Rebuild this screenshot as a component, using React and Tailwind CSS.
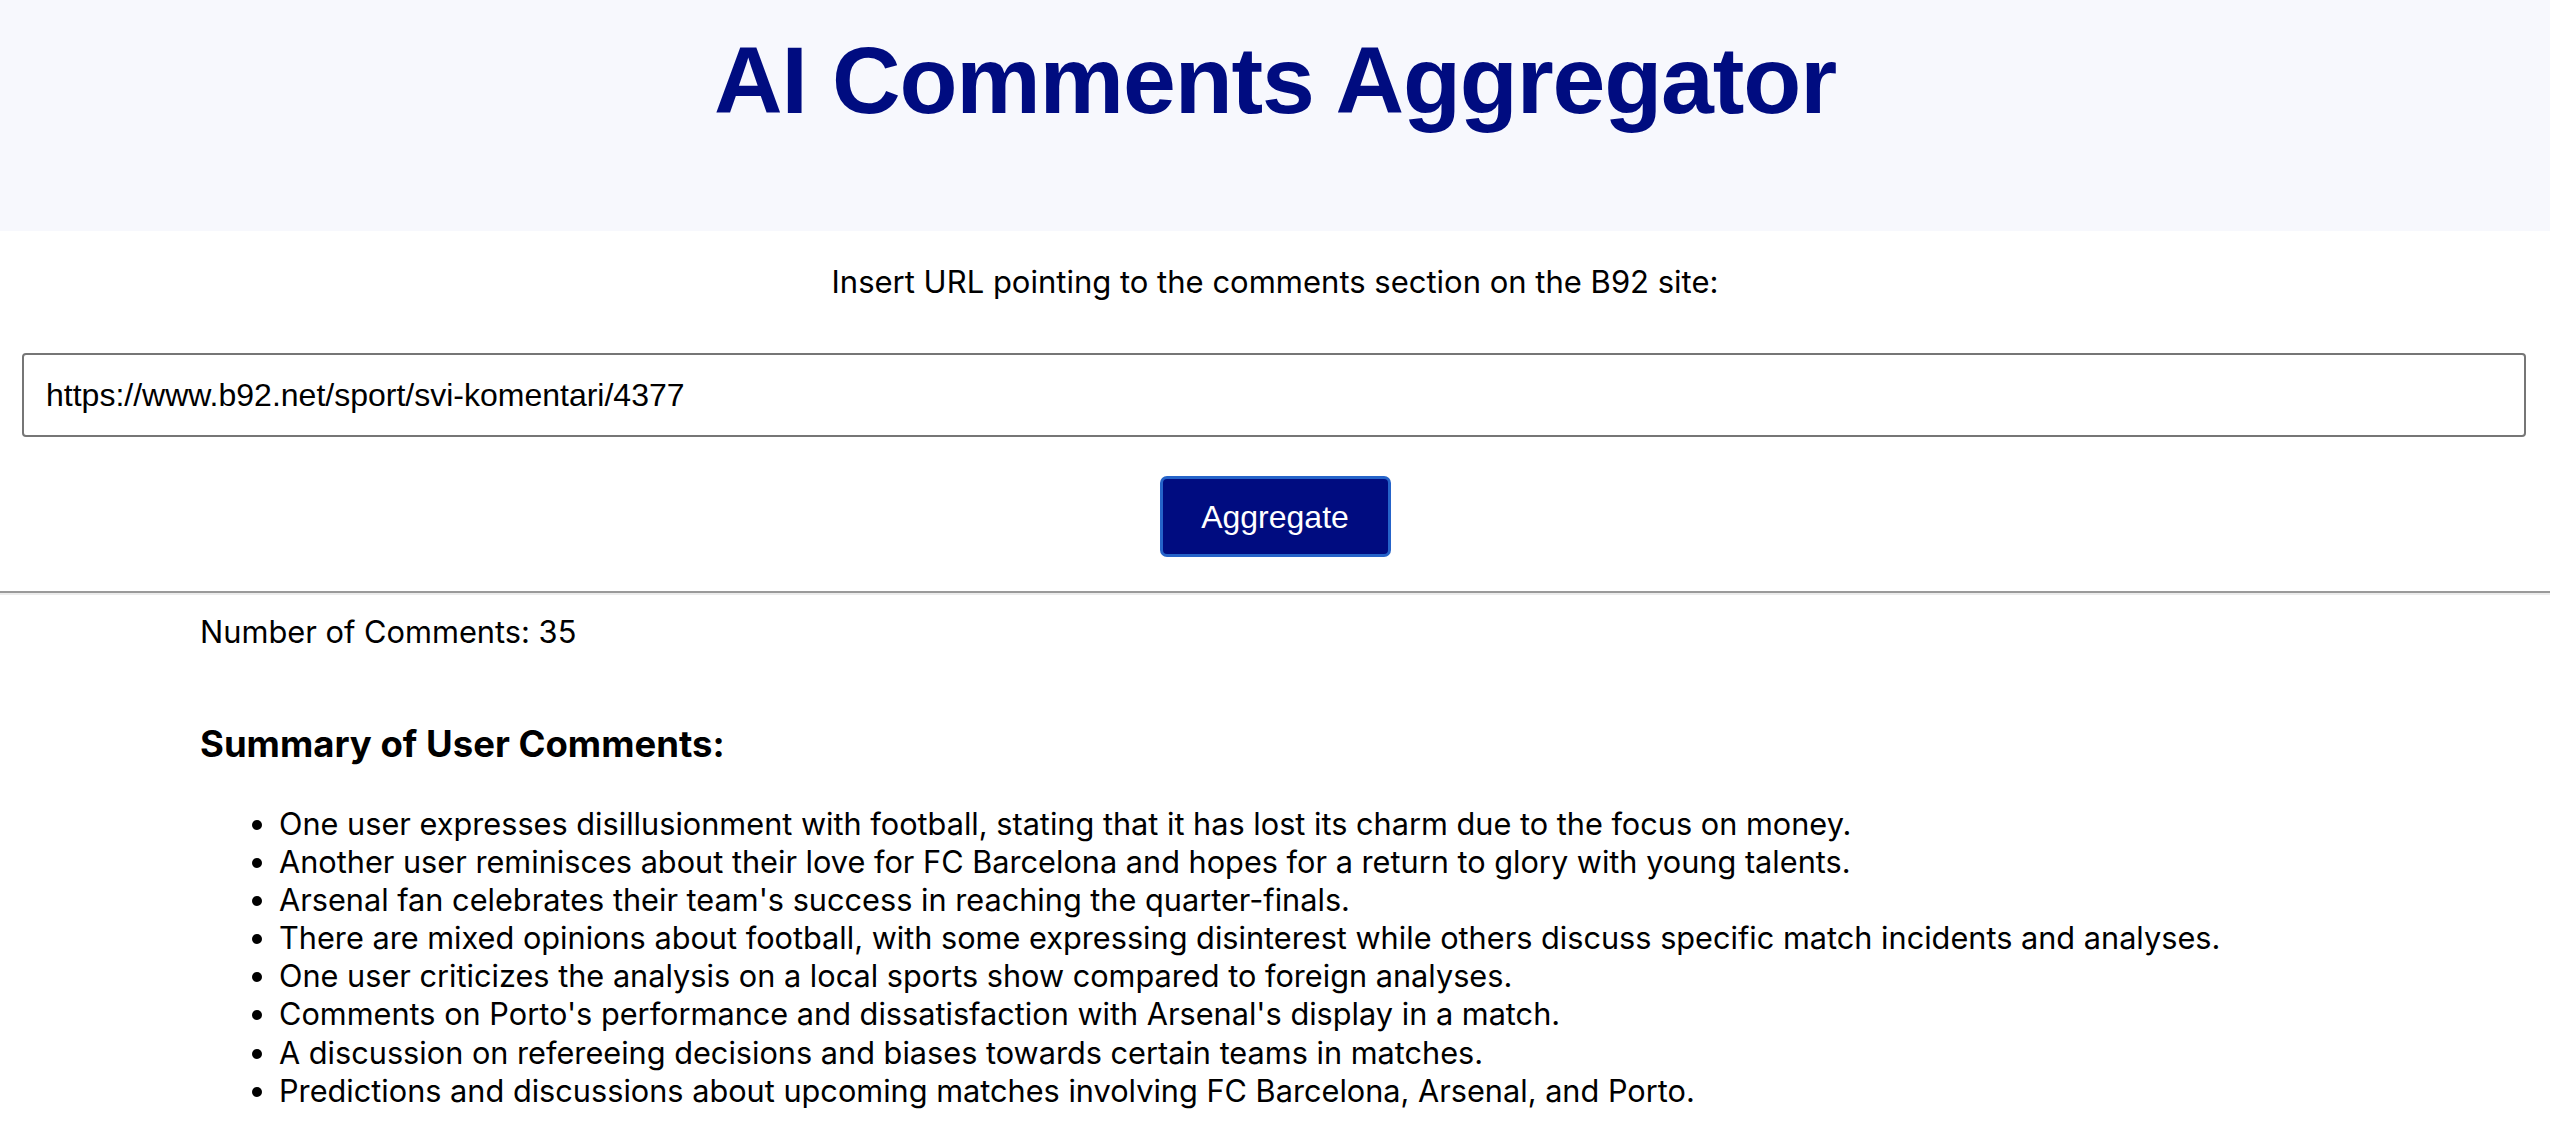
export default function App() {
  const items = [
    "One user expresses disillusionment with football, stating that it has lost its charm due to the focus on money.",
    "Another user reminisces about their love for FC Barcelona and hopes for a return to glory with young talents.",
    "Arsenal fan celebrates their team's success in reaching the quarter-finals.",
    "There are mixed opinions about football, with some expressing disinterest while others discuss specific match incidents and analyses.",
    "One user criticizes the analysis on a local sports show compared to foreign analyses.",
    "Comments on Porto's performance and dissatisfaction with Arsenal's display in a match.",
    "A discussion on refereeing decisions and biases towards certain teams in matches.",
    "Predictions and discussions about upcoming matches involving FC Barcelona, Arsenal, and Porto.",
  ];
  return (
    <div className="min-h-[1142px] w-full bg-white text-black font-['Inter',sans-serif]">
      <header className="h-[231px] bg-[#f7f8fd] pt-[33px]">
        <h1 className="text-center font-['Liberation_Sans',Arial,sans-serif] font-bold text-[95px] leading-[95px] tracking-[-0.012em] text-[#000c80]">
          AI Comments Aggregator
        </h1>
      </header>
      <p className="mt-[33px] text-center text-[31px] leading-[36px]">
        Insert URL pointing to the comments section on the B92 site:
      </p>
      <div className="mt-[53px] pl-[22px] pr-[24px]">
        <input
          type="text"
          defaultValue="https://www.b92.net/sport/svi-komentari/4377"
          className="block h-[84px] w-full rounded-[4px] border-2 border-[#767676] bg-white px-[22px] font-['Liberation_Sans',Arial,sans-serif] text-[32px] text-black outline-none"
        />
      </div>
      <div className="mt-[39px] flex justify-center">
        <button className="h-[81px] w-[231px] rounded-[7px] border-[3px] border-[#2563c9] bg-[#000c80] font-['Liberation_Sans',Arial,sans-serif] text-[32px] text-white">
          Aggregate
        </button>
      </div>
      <div className="mt-[34px]">
        <div className="h-[2px] bg-[#9a9a9a]" />
        <div className="h-[2px] bg-[#ececec]" />
      </div>
      <div className="px-[200px]">
        <p className="mt-[19px] text-[30.8px] leading-[36px]">Number of Comments: 35</p>
        <h3 className="mt-[74px] text-[36.5px] font-bold leading-[40px]">Summary of User Comments:</h3>
        <ul className="mt-[41px] list-disc pl-[79px] text-[30.7px] leading-[38.1px]">
          {items.map((t, i) => (
            <li key={i}>{t}</li>
          ))}
        </ul>
      </div>
    </div>
  );
}
